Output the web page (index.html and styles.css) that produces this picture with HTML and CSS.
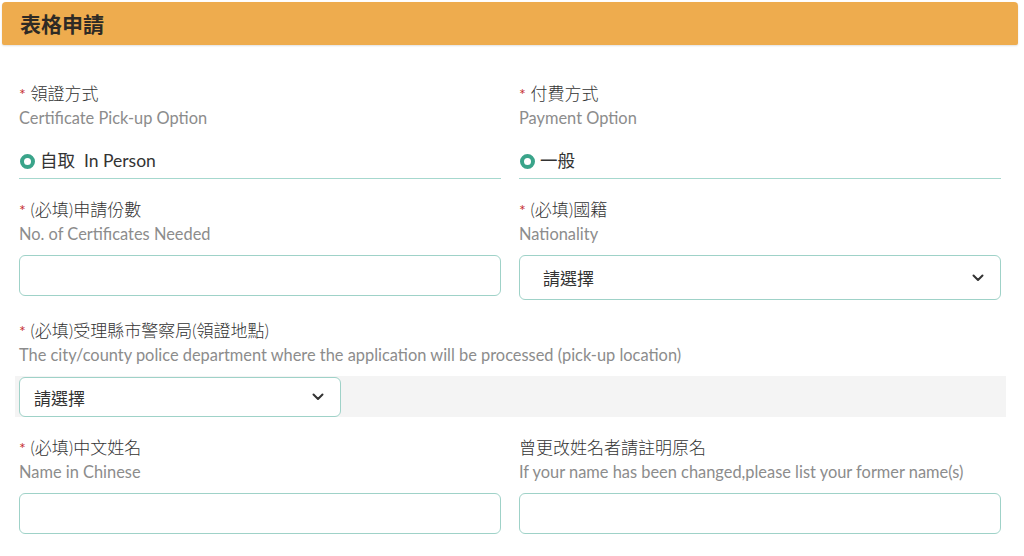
FILE: index.html
```html
<!DOCTYPE html>
<html lang="zh-Hant">
<head>
    <meta charset="UTF-8">
    <meta name="viewport" content="width=device-width, initial-scale=1.0">
    <title>表格申請</title>
    <link rel="stylesheet" href="styles.css">
</head>
<body>

    <div class="panel">
        <div class="panel-head">表格申請</div>

        <form class="form-grid">
            <div class="field">
                <label class="field-label"><span class="req">*</span> 領證方式</label>
                <div class="field-sub">Certificate Pick-up Option</div>
                <div class="radio-line"><span class="radio-dot"></span>自取&nbsp; In Person</div>
            </div>
            <div class="field">
                <label class="field-label"><span class="req">*</span> 付費方式</label>
                <div class="field-sub">Payment Option</div>
                <div class="radio-line"><span class="radio-dot"></span>一般</div>
            </div>

            <div class="field">
                <label class="field-label" for="copies"><span class="req">*</span> (必填)申請份數</label>
                <div class="field-sub">No. of Certificates Needed</div>
                <input class="text-box" type="text" id="copies">
            </div>
            <div class="field">
                <label class="field-label" for="nationality"><span class="req">*</span> (必填)國籍</label>
                <div class="field-sub">Nationality</div>
                <div class="select-wrap select-tall">
                    <select class="select-box" id="nationality">
                        <option>請選擇</option>
                    </select>
                    <svg class="chevron" width="12" height="8" viewBox="0 0 12 8"><path d="M1.5 1.5 L6 6 L10.5 1.5" fill="none" stroke="#333" stroke-width="2" stroke-linecap="round" stroke-linejoin="round"/></svg>
                </div>
            </div>

            <div class="field field-wide">
                <label class="field-label" for="station"><span class="req">*</span> (必填)受理縣市警察局(領證地點)</label>
                <div class="field-sub">The city/county police department where the application will be processed (pick-up location)</div>
                <div class="select-band">
                    <div class="select-wrap select-short">
                        <select class="select-box" id="station">
                            <option>請選擇</option>
                        </select>
                        <svg class="chevron" width="12" height="8" viewBox="0 0 12 8"><path d="M1.5 1.5 L6 6 L10.5 1.5" fill="none" stroke="#333" stroke-width="2" stroke-linecap="round" stroke-linejoin="round"/></svg>
                    </div>
                </div>
            </div>

            <div class="field">
                <label class="field-label" for="cname"><span class="req">*</span> (必填)中文姓名</label>
                <div class="field-sub">Name in Chinese</div>
                <input class="text-box" type="text" id="cname">
            </div>
            <div class="field">
                <label class="field-label" for="oldname">曾更改姓名者請註明原名</label>
                <div class="field-sub">If your name has been changed,please list your former name(s)</div>
                <input class="text-box" type="text" id="oldname">
            </div>
        </form>
    </div>

</body>
</html>
```

FILE: styles.css
```css
body {
    margin: 0;
    background: #ffffff;
    font-family: Lato, "Noto Sans CJK TC", sans-serif;
    color: #333333;
}

.panel {
    margin: 2px;
    width: 1016px;
}

.panel-head {
    background-color: #eeac4e;
    border-radius: 4px 4px 2px 2px;
    box-shadow: 0 1px 2px rgba(0, 0, 0, 0.12);
    height: 43px;
    line-height: 43px;
    padding-left: 18px;
    font-family: "Noto Sans CJK TC", sans-serif;
    font-size: 21px;
    font-weight: 700;
    color: #2e2a25;
}

.form-grid {
    display: grid;
    grid-template-columns: 1fr 1fr;
    column-gap: 18px;
    row-gap: 19px;
    padding: 37px 17px 0;
}

.field-wide {
    grid-column: 1 / 3;
}

.field-label {
    display: block;
    font-family: Lato, "Noto Sans CJK TC", sans-serif;
    font-size: 17px;
    font-weight: 300;
    line-height: 24px;
    color: #333333;
}

.req {
    color: #c62f2f;
    font-size: 16px;
    font-weight: 400;
}

.field-sub {
    font-size: 16.4px;
    font-weight: 400;
    line-height: 24px;
    color: #8c8c8c;
}

.radio-line {
    display: flex;
    align-items: center;
    padding: 19px 0 5px 1px;
    line-height: 24px;
    font-size: 17.5px;
    color: #333333;
    border-bottom: 1px solid #a6d8ce;
}

.radio-dot {
    width: 15px;
    height: 15px;
    box-sizing: border-box;
    border: 4.5px solid #3aa48a;
    border-radius: 50%;
    margin-right: 5px;
}

.text-box {
    display: block;
    width: 100%;
    height: 41px;
    margin-top: 9px;
    box-sizing: border-box;
    border: 1px solid #9fd2c8;
    border-radius: 6px;
    background: #ffffff;
    font-size: 16px;
    padding: 0 14px;
}

.select-wrap {
    position: relative;
    margin-top: 9px;
}

.select-box {
    appearance: none;
    -webkit-appearance: none;
    display: block;
    width: 100%;
    height: 100%;
    box-sizing: border-box;
    border: 1px solid #9fd2c8;
    border-radius: 6px;
    background: #ffffff;
    font-family: "Noto Sans CJK TC", sans-serif;
    font-size: 17px;
    color: #333333;
}

.select-tall {
    height: 45px;
}

.select-tall .select-box {
    padding-left: 23px;
}

.chevron {
    position: absolute;
    right: 17px;
    top: 50%;
    margin-top: -4px;
    pointer-events: none;
}

.select-band {
    background-color: #f4f4f4;
    margin: 9px -5px 0 -4px;
    padding: 1px 0 0 4px;
    height: 40px;
}

.select-short {
    margin-top: 0;
    width: 322px;
    height: 40px;
}

.select-short .select-box {
    padding-left: 14px;
}
```
